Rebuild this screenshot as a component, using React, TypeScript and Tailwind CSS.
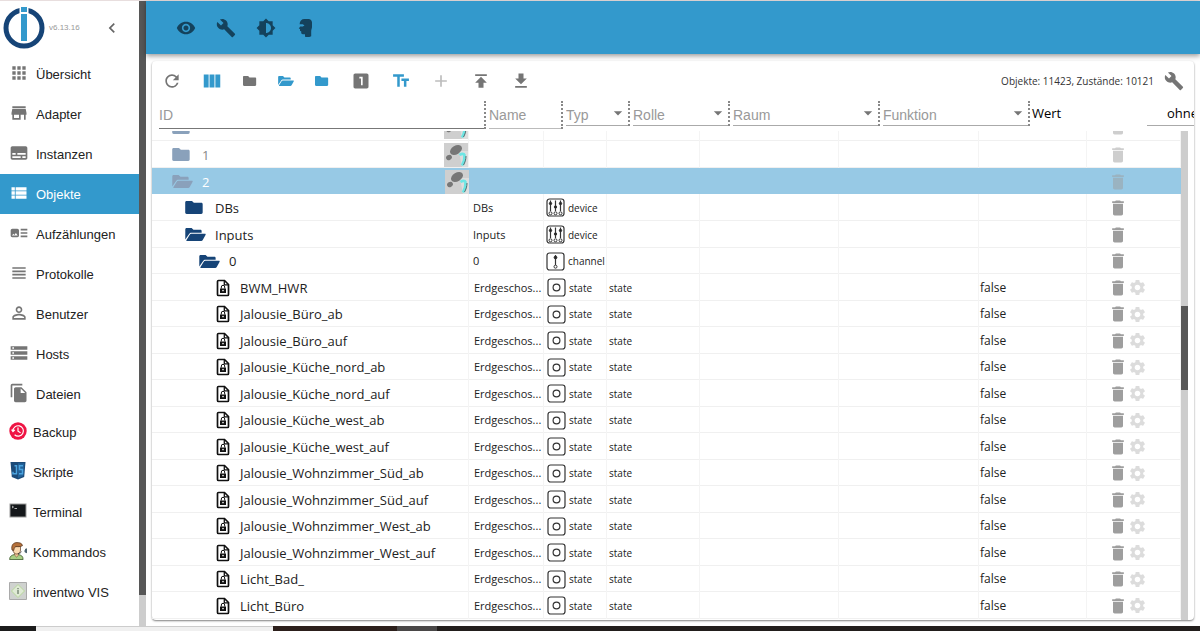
import React from "react";
import {
  MdAdd,
  MdApps,
  MdArrowDropDown,
  MdArtTrack,
  MdBrightness6,
  MdBuild,
  MdChevronLeft,
  MdDelete,
  MdFileCopy,
  MdGetApp,
  MdLooksOne,
  MdPersonOutline,
  MdPublish,
  MdRefresh,
  MdSettings,
  MdStorage,
  MdStore,
  MdSubtitles,
  MdTextFields,
  MdViewColumn,
  MdViewHeadline,
  MdViewList,
  MdVisibility,
} from "react-icons/md";

type Row = {
  id: string;
  kind: "folder" | "open" | "state";
  depth: number;
  name?: string;
  type?: "device" | "channel" | "state";
  adapter?: boolean;
  selected?: boolean;
};

const states = [
  "BWM_HWR",
  "Jalousie_Büro_ab",
  "Jalousie_Büro_auf",
  "Jalousie_Küche_nord_ab",
  "Jalousie_Küche_nord_auf",
  "Jalousie_Küche_west_ab",
  "Jalousie_Küche_west_auf",
  "Jalousie_Wohnzimmer_Süd_ab",
  "Jalousie_Wohnzimmer_Süd_auf",
  "Jalousie_Wohnzimmer_West_ab",
  "Jalousie_Wohnzimmer_West_auf",
  "Licht_Bad_",
  "Licht_Büro",
];

const rows: Row[] = [
  { id: "", kind: "folder", depth: 0, adapter: true },
  { id: "1", kind: "folder", depth: 0, adapter: true },
  { id: "2", kind: "open", depth: 0, adapter: true, selected: true },
  { id: "DBs", kind: "folder", depth: 1, name: "DBs", type: "device" },
  { id: "Inputs", kind: "open", depth: 1, name: "Inputs", type: "device" },
  { id: "0", kind: "open", depth: 2, name: "0", type: "channel" },
  ...states.map((id): Row => ({ id, kind: "state", depth: 3, name: "Erdgeschos...", type: "state" })),
];

const indent = ["pl-5", "pl-[33px]", "pl-[47px]", "pl-16"];

const mainNav = [
  { label: "Übersicht", Icon: MdApps },
  { label: "Adapter", Icon: MdStore },
  { label: "Instanzen", Icon: MdSubtitles },
  { label: "Objekte", Icon: MdViewList, active: true },
  { label: "Aufzählungen", Icon: MdArtTrack },
  { label: "Protokolle", Icon: MdViewHeadline },
  { label: "Benutzer", Icon: MdPersonOutline },
  { label: "Hosts", Icon: MdStorage },
  { label: "Dateien", Icon: MdFileCopy },
];

function Logo() {
  return (
    <svg viewBox="0 0 42 42" className="h-[42px] w-[42px] shrink-0" aria-label="ioBroker">
      <circle cx="21" cy="21" r="18" fill="none" stroke="#164477" strokeWidth="5" />
      <path d="M16.5 0h9v34h-9z" fill="#fff" />
      <path d="M18 0h6v5h-6zM18 7h6v27h-6z" fill="#3399cc" />
    </svg>
  );
}

function BackupIcon() {
  return (
    <svg viewBox="0 0 18 18" className="h-[18px] w-[18px]">
      <circle cx="9" cy="9" r="8.7" fill="#ef1444" />
      <path d="M4 9a5.2 5.2 0 1 1 1.6 3.7M2.6 7.6 4 9.6l1.8-1.8" fill="none" stroke="#fff" strokeWidth="1.2" />
      <path d="M9 5.6v3.6l2.6 1.5" fill="none" stroke="#fff" strokeWidth="1.2" />
    </svg>
  );
}

function ScriptIcon() {
  return (
    <svg viewBox="0 0 18 18" className="h-[18px] w-[18px]">
      <path d="M1.5 0h15l-1.3 15L9 17.5 2.8 15z" fill="#1b4a78" />
      <path d="M9 1.3h6.3l-1.1 12.7L9 16z" fill="#22629a" />
      <path d="M4 9.8v2h3.5V3.800H5.500M14 3.800h-3.500v3.700h3v4.300H10" fill="none" stroke="#4aa3df" strokeWidth="1.5" />
    </svg>
  );
}

function TerminalIcon() {
  return (
    <svg viewBox="0 0 18 18" className="h-[18px] w-[18px]">
      <path d="M.5 1.500h17v14H.5z" fill="#9a9a9a" />
      <path d="M1.500 2.500h15v12h-15z" fill="#15181b" />
      <path d="m3 4 1.500 1L3 6M5.500 6.500h2.500" fill="none" stroke="#ddd" strokeWidth=".8" />
    </svg>
  );
}

function CommandIcon() {
  return (
    <svg viewBox="0 0 18 18" className="h-[18px] w-[18px]">
      <path d="M.6 17.500c0-3.500 2.500-4.500 5-5h3.500c3 .5 5 1.500 5 5z" fill="#a9cf84" stroke="#3d5a2e" strokeWidth=".8" />
      <path d="M5.500 10h4v3.200L7.600 15l-2-1.800z" fill="#f3c79a" stroke="#5b3a22" strokeWidth=".5" />
      <path d="M4 4.500h7.500V8c0 2.500-1.700 4-3.700 4S4 10.500 4 8z" fill="#fbd9b0" stroke="#5b3a22" strokeWidth=".7" />
      <path d="M3 8C2 3 4.500.6 8 .6c2.500 0 5 .6 5.500 3-2 1.500-5 1-7 1C5.500 5.500 5 7 4.600 8.600z" fill="#b5703a" stroke="#5b3a22" strokeWidth=".8" />
      <path d="M9 11.500c2 0 3-.8 3.400-2" fill="none" stroke="#333" strokeWidth=".8" />
      <path d="M15 8.500h1V7l2-.8v5l-2-.8z" fill="#4d6470" />
    </svg>
  );
}

function InventwoIcon() {
  return (
    <svg viewBox="0 0 18 18" className="h-[18px] w-[18px]">
      <path d="M.5.5h17v17H.5z" fill="#cfd2cf" stroke="#aaa" />
      <path d="m9 2.500 6.500 6.500L9 15.500 2.500 9z" fill="#dfead5" stroke="#b9d89c" />
      <path d="M8.500 6h1v1.200h-1zM8.500 8h1v4h-1z" fill="#4b5b4b" />
    </svg>
  );
}

const adapterNav = [
  { label: "Backup", Icon: BackupIcon },
  { label: "Skripte", Icon: ScriptIcon },
  { label: "Terminal", Icon: TerminalIcon },
  { label: "Kommandos", Icon: CommandIcon },
  { label: "inventwo VIS", Icon: InventwoIcon },
];

function HeadIcon() {
  return (
    <svg viewBox="0 0 20 20" className="h-5 w-5">
      <path
        d="M8.500 1h4c2 0 3.500 1.600 3.500 3.600V9c0 1.600-.8 2.500-.8 4v5.200c-1.800.9-4 1.100-6.200.6v-2.600H6.800c-1 0-1.600-.6-1.600-1.600v-1.300L4 12.900V11l-1.200-.5L4.200 8.600h2.600l1.700-1.200-1.700-1.200H3.600C3.800 3 5.500 1 8.500 1z"
        fill="currentColor"
      />
    </svg>
  );
}

function FolderIcon() {
  return (
    <svg viewBox="0 0 20 14" className="h-full w-full" fill="currentColor">
      <path d="M1.500 0h5.800l2 2h8c.9 0 1.500.6 1.500 1.500v9c0 .9-.6 1.500-1.500 1.500H1.500C.6 14 0 13.400 0 12.500v-11C0 .6.6 0 1.500 0z" />
    </svg>
  );
}

function FolderOpenIcon() {
  return (
    <svg viewBox="0 0 22 14" className="h-full w-full" fill="currentColor">
      <path d="M1.500 0h5.300l2 2h7.400c.8 0 1.400.6 1.400 1.400V5H6.500c-1 0-1.800.5-2.200 1.300L0 12.500v-11C0 .6.6 0 1.500 0z" />
      <path d="M6.500 6.300H21c.9 0 1.200.6.8 1.300l-3 5.400c-.4.7-.9 1-1.700 1H2c-.8 0-1.100-.5-.7-1.200L4.800 7.300c.4-.7.9-1 1.700-1z" />
    </svg>
  );
}

function StateFileIcon() {
  return (
    <svg viewBox="0 0 14 18" className="h-[18px] w-[14px] shrink-0">
      <path d="M2.500 1.500h6l4 4v10c0 .6-.4 1-1 1h-9c-.6 0-1-.4-1-1v-13c0-.6.4-1 1-1z" fill="none" stroke="#111" strokeWidth="1.700" />
      <path d="M8.300 1.500v4.300h4" fill="none" stroke="#111" strokeWidth="1.300" />
      <path d="M4 9.500h6V14H4z" fill="#111" />
      <path d="M5.300 9.500V8a1.700 1.700 0 0 1 3.400 0v1.500" fill="none" stroke="#111" />
      <circle cx="7" cy="11.600" r=".8" fill="#fff" />
    </svg>
  );
}

function AdapterImage() {
  return (
    <svg viewBox="0 0 24 24" className="h-6 w-6 shrink-0">
      <path d="M0 0h24v24H0z" fill="#cfcfcf" />
      <path d="M15 8h9v16h-6z" fill="#dedede" />
      <ellipse cx="12" cy="7" rx="6.500" ry="4.300" transform="rotate(-30 12 7)" fill="#777" />
      <ellipse cx="5" cy="14.500" rx="3" ry="2.500" transform="rotate(-30 5 14.500)" fill="#777" />
      <path d="M15.500 12c2-1.500 4.500-1.500 5 0 .3 3.500-.5 7-2.500 10.500" fill="none" stroke="#6ee6e4" strokeWidth="2.600" />
      <path d="M22 13c0 3.500-1 6.500-2.500 9" fill="none" stroke="#4d6f70" />
    </svg>
  );
}

function TypeIcon({ type }: { type: string }) {
  return (
    <svg viewBox="0 0 19 19" className="h-[19px] w-[19px] shrink-0" fill="none" stroke="#333">
      <rect x="1" y="1" width="17" height="17" rx="2.500" strokeWidth="1.200" />
      {type === "state" && <circle cx="9.500" cy="9.500" r="3.400" strokeWidth="1.200" />}
      {type === "channel" && (
        <>
          <path d="M9.500 3v10" strokeWidth="1.200" />
          <circle cx="9.500" cy="5.500" r="1.400" fill="#222" />
          <circle cx="9.500" cy="14.700" r="1.500" />
        </>
      )}
      {type === "device" && (
        <>
          <path d="M4.500 2.500V13M9.500 2.500V13M14.500 2.500V13" strokeWidth="1.200" />
          <circle cx="4.500" cy="5.500" r="1.200" fill="#222" />
          <circle cx="9.500" cy="9" r="1.200" fill="#222" />
          <circle cx="14.500" cy="5.500" r="1.200" fill="#222" />
          <circle cx="4.500" cy="15.300" r="1.500" />
          <circle cx="9.500" cy="15.300" r="1.500" />
          <circle cx="14.500" cy="15.300" r="1.500" />
        </>
      )}
    </svg>
  );
}

function Sidebar() {
  return (
    <aside className="flex w-[146px] shrink-0">
      <div className="min-w-0 flex-1">
        <div className="flex h-[53px] items-center pl-[3px]">
          <Logo />
          <span className="ml-1 text-[8px] text-[#999]">v6.13.16</span>
          <button aria-label="Menü einklappen" className="ml-[22px] text-[#666]">
            <MdChevronLeft size={20} />
          </button>
        </div>
        <nav className="text-[13px] text-[#222]">
          {mainNav.map(({ label, Icon, active }) => (
            <a
              key={label}
              href="#"
              className={`flex h-10 items-center gap-[7px] pl-[9px] pt-0.5 ${active ? "bg-[#3399cc] text-white" : ""}`}
            >
              <Icon size={20} className={`mb-1 shrink-0 ${active ? "text-white" : "text-[#757575]"}`} />
              {label}
            </a>
          ))}
          <div className="-mt-px">
            {adapterNav.map(({ label, Icon }) => (
              <a key={label} href="#" className="flex h-10 items-center gap-1.5 pl-[9px]">
                <span className="mb-1 shrink-0">
                  <Icon />
                </span>
                {label}
              </a>
            ))}
          </div>
        </nav>
      </div>
      <div className="flex w-[7px] flex-col bg-[#cdcdcd]">
        <div className="h-[95%] bg-[#575757]" />
      </div>
    </aside>
  );
}

function Toolbar() {
  return (
    <div className="flex h-10 items-center text-[#757575] [&>button]:flex [&>button]:w-10 [&>button]:justify-center">
      <button aria-label="Aktualisieren"><MdRefresh size={20} /></button>
      <button aria-label="Spalten" className="text-[#3399cc]"><MdViewColumn size={22} /></button>
      <div className="flex pr-px [&>button]:flex [&>button]:w-9 [&>button]:justify-center">
        <button aria-label="Alle zuklappen"><span className="h-[10px] w-[14px]"><FolderIcon /></span></button>
        <button aria-label="Alle aufklappen" className="text-[#3399cc]"><span className="h-[10px] w-4"><FolderOpenIcon /></span></button>
        <button aria-label="Eine Ebene zuklappen" className="text-[#3399cc]"><span className="h-[10px] w-[14px]"><FolderIcon /></span></button>
      </div>
      <button aria-label="Eine Ebene aufklappen"><MdLooksOne size={20} /></button>
      <button aria-label="Beschreibungen" className="text-[#3399cc]"><MdTextFields size={20} /></button>
      <button aria-label="Hinzufügen" className="text-[#bdbdbd]"><MdAdd size={20} /></button>
      <button aria-label="Hochladen"><MdPublish size={20} /></button>
      <button aria-label="Herunterladen"><MdGetApp size={20} /></button>
      <span className="ml-auto text-[10px] text-[#333]">Objekte: 11423, Zustände: 10121</span>
      <button aria-label="Einstellungen"><MdBuild size={20} /></button>
    </div>
  );
}

function SelectFilter({ label, width }: { label: string; width: string }) {
  return (
    <div className={`${width} flex h-[25px] shrink-0 items-start border-r-2 border-dotted border-[#888] pl-[3px]`}>
      <div className="relative h-[25px] flex-1 border-b border-[#aaa]">
        <select aria-label={label} className="h-6 w-full appearance-none bg-transparent pt-1 text-[#999]">
          <option>{label}</option>
        </select>
        <MdArrowDropDown size={20} className="pointer-events-none absolute right-0 top-0.5 text-[#757575]" />
      </div>
    </div>
  );
}

function FilterBar() {
  return (
    <div className="flex h-[30px] items-start overflow-hidden font-['Liberation_Sans',sans-serif] text-[14px]">
      <div className="flex h-7 min-w-0 flex-1 border-r-2 border-dotted border-[#888] pl-[7px]">
        <input aria-label="ID" placeholder="ID" className="w-full border-b border-[#777] bg-transparent pt-0.5 placeholder:text-[#999]" />
      </div>
      <div className="flex h-7 w-[77px] shrink-0 border-r-2 border-dotted border-[#888] pl-[3px]">
        <input aria-label="Name" placeholder="Name" className="w-full border-b border-[#bbb] bg-transparent pt-0.5 placeholder:text-[#999]" />
      </div>
      <SelectFilter label="Typ" width="w-[67px]" />
      <SelectFilter label="Rolle" width="w-[100px]" />
      <SelectFilter label="Raum" width="w-[150px]" />
      <SelectFilter label="Funktion" width="w-[150px]" />
      <span className="w-[117px] shrink-0 pl-0.5 font-['Open_Sans',sans-serif] text-[13px] leading-6 text-black">Wert</span>
      <select
        aria-label="Benutzerdefinierte Einstellungen"
        className="h-[25px] w-[47px] shrink-0 appearance-none overflow-hidden border-b border-[#aaa] bg-transparent pl-5 pt-0.5 font-['Open_Sans',sans-serif] text-[13px] text-black"
      >
        <option>ohne</option>
      </select>
    </div>
  );
}

function ObjectRow({ row }: { row: Row }) {
  const isState = row.kind === "state";
  const faded = row.adapter ? "opacity-50" : "";
  return (
    <tr className={`odd:h-[27px] even:h-[26px] [&>td]:pt-0.5 ${row.selected ? "bg-[#97c9e5]" : "border-b border-[#f0f0f0] [&>td]:border-r [&>td]:border-[#f4f4f4]"}`}>
      <td className={indent[row.depth]}>
        <div className="flex items-center">
          {isState ? (
            <span className="flex w-6"><StateFileIcon /></span>
          ) : (
            <span className={`flex w-[30px] ${row.adapter ? "text-[#8aa1bb]" : "text-[#164477]"}`}>
              <span className={row.kind === "open" ? "h-[13px] w-[21px]" : "h-[13px] w-[19px]"}>
                {row.kind === "open" ? <FolderOpenIcon /> : <FolderIcon />}
              </span>
            </span>
          )}
          <span className={`flex-1 text-[13px] ${row.selected ? "text-white" : row.adapter ? "text-[#888]" : ""}`}>{row.id}</span>
          {row.adapter && <AdapterImage />}
        </div>
      </td>
      <td className={`text-[11px] ${isState ? "pl-[5px]" : "pl-1"}`}>{row.name}</td>
      <td className={isState ? "pl-[3px]" : "pl-0.5"}>
        {row.type && (
          <div className="flex items-center gap-[3px] text-[10px]">
            <TypeIcon type={row.type} />
            <span>{row.type}</span>
          </div>
        )}
      </td>
      <td className="pl-0.5 text-[10px]">{isState ? "state" : ""}</td>
      <td />
      <td />
      <td className="pl-px text-[12px]">{isState ? "false" : ""}</td>
      <td className="pl-[21px]">
        <div className={`flex items-center text-[#9e9e9e] ${faded}`}>
          <button aria-label="Löschen"><MdDelete size={20} /></button>
          {isState && <button aria-label="Konfiguration" className="text-[#dcdcdc]"><MdSettings size={19} /></button>}
        </div>
      </td>
    </tr>
  );
}

export default function App() {
  return (
    <div className="flex h-screen flex-col overflow-hidden bg-white font-['Liberation_Sans',sans-serif]">
      <div className="flex min-h-0 flex-1 border-t border-[#e8dede]">
        <Sidebar />
        <main className="flex min-w-0 flex-1 flex-col">
          <header className="flex h-[53px] shrink-0 items-center bg-[#3399cc] pl-5 text-[#14425c] shadow-[0_2px_5px_rgba(0,0,0,0.4)] [&>button]:flex [&>button]:w-10 [&>button]:justify-center">
            <button aria-label="Ansicht"><MdVisibility size={20} /></button>
            <button aria-label="Systemeinstellungen"><MdBuild size={20} /></button>
            <button aria-label="Design"><MdBrightness6 size={20} /></button>
            <button aria-label="Expertenmodus"><HeadIcon /></button>
          </header>
          <section className="mx-1.5 mb-1.5 mt-[7px] flex min-h-0 flex-1 flex-col rounded font-['Open_Sans',sans-serif] text-[#222] shadow-[0_1px_2px_rgba(0,0,0,0.5)]">
            <Toolbar />
            <FilterBar />
            <div className="mr-1.5 flex min-h-0 flex-1 overflow-hidden">
              <div className="min-w-0 flex-1 overflow-hidden">
                <table className="-mt-[18px] w-full table-fixed border-collapse leading-4">
                  <colgroup>
                    <col />
                    <col className="w-[75px]" />
                    <col className="w-[63px]" />
                    <col className="w-[93px]" />
                    <col className="w-[139px]" />
                    <col className="w-[140px]" />
                    <col className="w-[108px]" />
                    <col className="w-[94px]" />
                  </colgroup>
                  <tbody>
                    {rows.map((row, i) => (
                      <ObjectRow key={i} row={row} />
                    ))}
                  </tbody>
                </table>
              </div>
              <div className="flex w-[7px] flex-col bg-[#cdcdcd] pt-[175px]">
                <div className="h-[84px] bg-[#575757]" />
              </div>
            </div>
          </section>
        </main>
      </div>
      {/* taskbar edge */}
      <div className="flex h-[5px] shrink-0 bg-[#221e1c]">
        <div className="w-9 bg-[#1c1c1c]" />
        <div className="w-[237px] border-t border-[#ccc] bg-[#f0f0f0]" />
        <div className="w-[124px] bg-[#2c1f1b]" />
        <div className="w-10 bg-[#4a4848]" />
      </div>
    </div>
  );
}
